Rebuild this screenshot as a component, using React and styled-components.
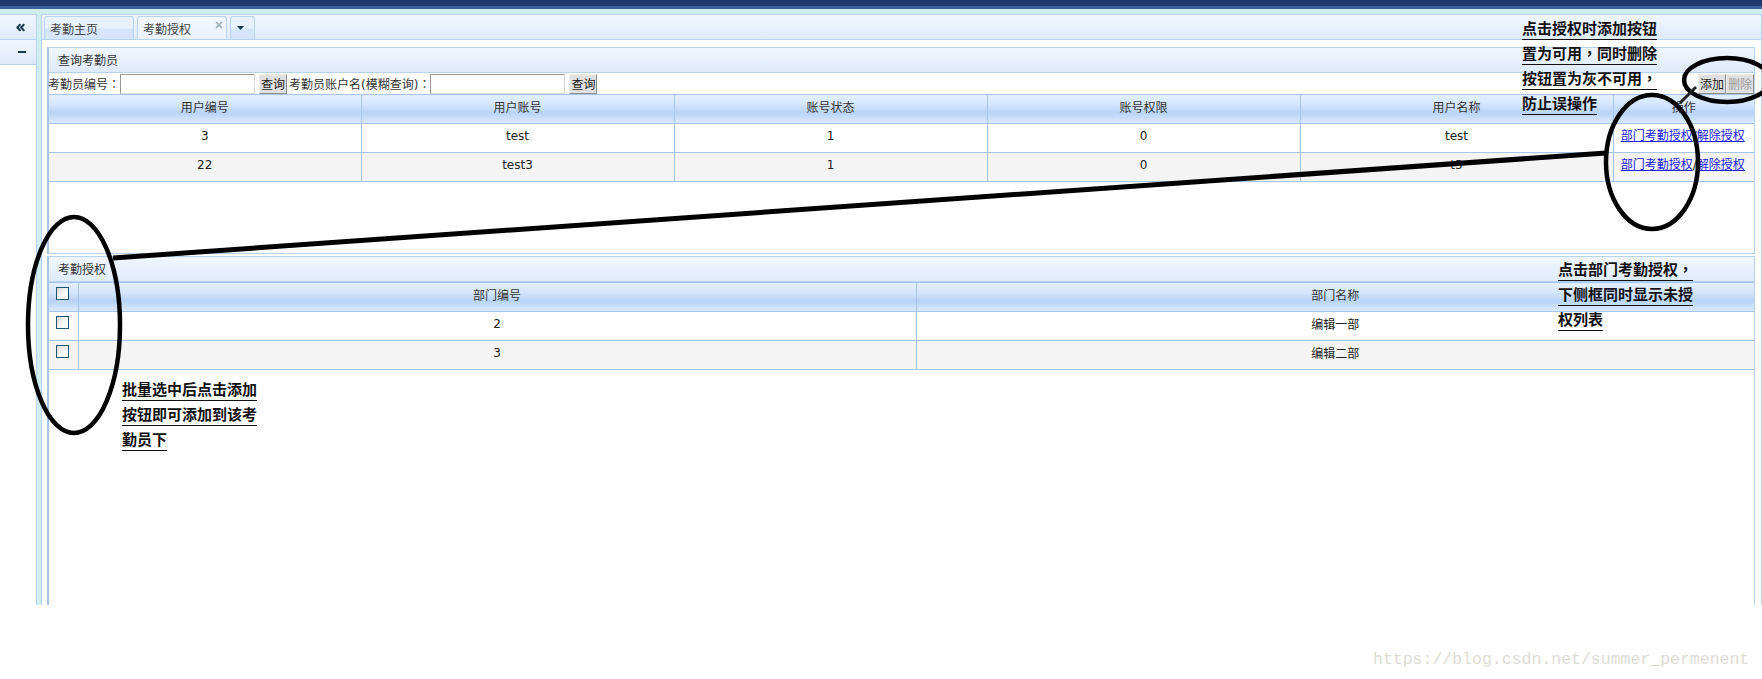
import React from 'react';
import styled, { createGlobalStyle } from 'styled-components';
import { ChevronsLeft, X } from 'lucide-react';

const GlobalStyle = createGlobalStyle`
  html, body {
    margin: 0;
    padding: 0;
    background: #fff;
  }
  body {
    font-family: 'DejaVu Sans', 'Noto Sans CJK SC', sans-serif;
    font-size: 12px;
    color: #222;
  }
  * {
    box-sizing: border-box;
  }
`;

const Page = styled.div`
  position: relative;
  width: 1762px;
  height: 679px;
  overflow: hidden;
`;

const Frame = styled.div`
  display: flex;
  flex-direction: column;
  height: 605px;
  background: #cfeeee;
`;

const TopBar = styled.div`
  height: 9px;
  flex: none;
  margin-bottom: 5px;
  background: #1f3a70;
  border-bottom: 3px solid #3d619b;
`;

const Body = styled.div`
  flex: 1;
  display: flex;
  gap: 4px;
  min-height: 0;
`;

const Side = styled.aside`
  width: 37px;
  flex: none;
  background: #fff;
  border-top: 1px solid #b8d2f2;
  border-right: 1px solid #b8d2f2;
`;

const SideRow = styled.div`
  height: 25px;
  display: flex;
  align-items: center;
  justify-content: flex-end;
  padding-right: 9px;
  background: linear-gradient(#f0f6ff, #dfeafb);
  border-bottom: 1px solid #b8d2f2;
  color: #15384f;
`;

const SideDash = styled.span`
  display: block;
  width: 8px;
  height: 2px;
  margin-right: 1px;
  background: #15384f;
`;

const Main = styled.main`
  flex: 1;
  min-width: 0;
  display: flex;
  flex-direction: column;
  background: #fff;
  border-left: 1px solid #b8d2f2;
  border-right: 1px solid #b8d2f2;
  border-top: 1px solid #b8d2f2;
`;

const TabBar = styled.div`
  height: 25px;
  flex: none;
  display: flex;
  align-items: flex-end;
  gap: 3px;
  padding-left: 2px;
  background: linear-gradient(#f0f6ff, #dfeafb);
  border-bottom: 1px solid #b8d2f2;
`;

const Tab = styled.div`
  position: relative;
  height: 23px;
  width: ${(p) => p.$width}px;
  padding: 3px 0 0 5px;
  border: 1px solid #b8d2f2;
  border-bottom: none;
  border-radius: 3px 3px 0 0;
  background: ${(p) =>
    p.$active ? 'linear-gradient(#f2f7ff, #eaf2fe)' : 'linear-gradient(#e8f1fe 50%, #d5e5fb 55%)'};
  color: #444;
`;

const TabClose = styled.span`
  position: absolute;
  top: 3px;
  right: 2px;
  display: flex;
  color: #9ab0b8;
`;

const Content = styled.div`
  flex: 1;
  min-height: 0;
  display: flex;
  flex-direction: column;
  gap: 2px;
  padding: 7px 6px 0 5px;
`;

const Panel = styled.section`
  display: flex;
  flex-direction: column;
  flex: ${(p) => (p.$grow ? 1 : 'none')};
  height: ${(p) => (p.$grow ? 'auto' : `${p.$height}px`)};
  border: 1px solid #b8d2f2;
  border-bottom: ${(p) => (p.$grow ? 'none' : '1px solid #b8d2f2')};
  border-left: 2px solid #a6c5ea;
`;

const PanelTitle = styled.div`
  height: 25px;
  flex: none;
  display: flex;
  align-items: center;
  padding: 0 0 2px 9px;
  background: linear-gradient(#f0f6ff, #dfeafb);
  border-bottom: 1px solid #b8d2f2;
  color: #333;
`;

const Toolbar = styled.div`
  height: 21px;
  flex: none;
  display: flex;
  align-items: center;
  margin-left: -1px;
  white-space: nowrap;
`;

const Label = styled.span`
  margin-left: ${(p) => p.$before || 0}px;
  color: #333;
`;

const TextInput = styled.input`
  width: 135px;
  height: 20px;
  padding: 0;
  margin: 0;
  background: #fff;
  border: 1px solid;
  border-color: #9a9a9a #d8d8d8 #d8d8d8 #9a9a9a;
`;

const PlainButton = styled.button`
  width: 28px;
  height: 20px;
  padding: 0;
  margin: 0 0 0 ${(p) => p.$before || 0}px;
  font: inherit;
  color: ${(p) => (p.disabled ? '#9c9c9c' : '#222')};
  background: #e0e0e0;
  border: 1px solid;
  border-color: #eee #8e8e8e #8e8e8e #eee;
`;

const Spacer = styled.div`
  flex: 1;
`;

const Table = styled.table`
  width: 100%;
  table-layout: fixed;
  border-collapse: collapse;
  border-top: 1px solid #a6c5ea;
`;

const HeadCell = styled.th`
  height: 29px;
  padding: 0 0 5px;
  font-weight: normal;
  color: #333;
  text-align: center;
  background: linear-gradient(#e3effe, #d2e4fb 35%, #b8d3f6 62%, #dcebfd);
  border-right: 1px solid #a6c5ea;
  border-bottom: 1px solid #a6c5ea;
  &:last-child {
    border-right: none;
  }
`;

const Row = styled.tr`
  background: ${(p) => (p.$alt ? '#f4f4f4' : '#fff')};
`;

const Cell = styled.td`
  height: 29px;
  padding: 0 0 4px;
  text-align: center;
  color: #222;
  border-right: 1px solid #a6c5ea;
  border-bottom: 1px solid #a6c5ea;
  &:last-child {
    border-right: none;
  }
`;

// chinese text sits a little lower in its line box than the latin cells
const TextCell = styled(Cell)`
  padding: 0 0 6px;
`;

const LinkCell = styled(Cell)`
  padding: 0 2px 7px 0;
`;

const CheckCell = styled(Cell)`
  vertical-align: top;
  padding: 4px 0 0 7px;
  text-align: left;
`;

const CheckHead = styled(HeadCell)`
  vertical-align: top;
  padding: 4px 0 0 7px;
  text-align: left;
`;

const Check = styled.span`
  display: block;
  width: 13px;
  height: 13px;
  border: 1px solid #1d5673;
  background: linear-gradient(135deg, #d8d8d4, #fff 70%);
`;

const OpLink = styled.a`
  color: #2020e0;
  text-decoration: underline;
`;

const Note = styled.div`
  position: absolute;
  left: ${(p) => p.$x}px;
  top: ${(p) => p.$y}px;
  width: 136px;
  display: flex;
  flex-direction: column;
  gap: 2px;
  font-family: 'Noto Sans CJK SC', sans-serif;
  font-size: 15px;
  font-weight: 700;
  line-height: 22px;
  color: #111;
  z-index: 3;
`;

const NoteLine = styled.span`
  align-self: flex-start;
  border-bottom: 1px solid #111;
`;

// full-width punctuation sits in the middle of its cell in the reference
const Punct = styled.span`
  font-family: 'Noto Sans CJK TC', sans-serif;
`;

const Marks = styled.svg`
  position: absolute;
  left: 0;
  top: 0;
  z-index: 2;
  pointer-events: none;
`;

const Watermark = styled.div`
  position: absolute;
  left: 1373px;
  top: 650px;
  font-family: 'Liberation Mono', monospace;
  font-size: 16.5px;
  color: #dedcd4;
  white-space: nowrap;
`;

const userCols = [312, 313, 313, 313, 313, 141];
const users = [
  { id: '3', account: 'test', status: '1', power: '0', name: 'test' },
  { id: '22', account: 'test3', status: '1', power: '0', name: 't3' },
];
const depts = [
  { id: '2', name: '编辑一部' },
  { id: '3', name: '编辑二部' },
];

const withPunct = (text) =>
  text.split(/(，|：)/).map((part, i) => (i % 2 === 1 ? <Punct key={i}>{part}</Punct> : part));

const NoteBlock = ({ x, y, lines }) => (
  <Note $x={x} $y={y}>
    {lines.map((line) => (
      <NoteLine key={line}>{withPunct(line)}</NoteLine>
    ))}
  </Note>
);

const App = () => {
  return (
    <Page>
      <GlobalStyle />
      <Frame>
        <TopBar />
        <Body>
          <Side>
            <SideRow>
              <ChevronsLeft size={13} strokeWidth={3.5} />
            </SideRow>
            <SideRow>
              <SideDash />
            </SideRow>
          </Side>
          <Main>
            <TabBar>
              <Tab $width={90}>考勤主页</Tab>
              <Tab $width={90} $active>
                考勤授权
                <TabClose>
                  <X size={10} strokeWidth={4} />
                </TabClose>
              </Tab>
              <Tab $width={25}>
                <svg width="10" height="14" viewBox="0 0 10 14">
                  <path d="M1 6h7L4.5 10z" fill="#15384f" />
                </svg>
              </Tab>
            </TabBar>
            <Content>
              <Panel $height={207}>
                <PanelTitle>查询考勤员</PanelTitle>
                <Toolbar>
                  <Label>考勤员编号{withPunct('：')}</Label>
                  <TextInput />
                  <PlainButton $before={4}>查询</PlainButton>
                  <Label $before={2}>考勤员账户名(模糊查询){withPunct('：')}</Label>
                  <TextInput />
                  <PlainButton $before={4}>查询</PlainButton>
                  <Spacer />
                  <PlainButton>添加</PlainButton>
                  <PlainButton disabled>删除</PlainButton>
                </Toolbar>
                <Table>
                  <colgroup>
                    {userCols.map((w, i) => (
                      <col key={i} width={w} />
                    ))}
                  </colgroup>
                  <thead>
                    <tr>
                      {['用户编号', '用户账号', '账号状态', '账号权限', '用户名称', '操作'].map((h) => (
                        <HeadCell key={h}>{h}</HeadCell>
                      ))}
                    </tr>
                  </thead>
                  <tbody>
                    {users.map((u, i) => (
                      <Row key={u.id} $alt={i % 2 === 1}>
                        <Cell>{u.id}</Cell>
                        <Cell>{u.account}</Cell>
                        <Cell>{u.status}</Cell>
                        <Cell>{u.power}</Cell>
                        <Cell>{u.name}</Cell>
                        <LinkCell>
                          <OpLink>部门考勤授权</OpLink>/<OpLink>解除授权</OpLink>
                        </LinkCell>
                      </Row>
                    ))}
                  </tbody>
                </Table>
              </Panel>
              <Panel $grow>
                <PanelTitle>考勤授权</PanelTitle>
                <Table>
                  <colgroup>
                    <col width={29} />
                    <col width={838} />
                    <col />
                  </colgroup>
                  <thead>
                    <tr>
                      <CheckHead>
                        <Check />
                      </CheckHead>
                      <HeadCell>部门编号</HeadCell>
                      <HeadCell>部门名称</HeadCell>
                    </tr>
                  </thead>
                  <tbody>
                    {depts.map((d, i) => (
                      <Row key={d.id} $alt={i % 2 === 1}>
                        <CheckCell>
                          <Check />
                        </CheckCell>
                        <Cell>{d.id}</Cell>
                        <TextCell>{d.name}</TextCell>
                      </Row>
                    ))}
                  </tbody>
                </Table>
              </Panel>
            </Content>
          </Main>
        </Body>
      </Frame>

      <NoteBlock x={1522} y={17} lines={['点击授权时添加按钮', '置为可用，同时删除', '按钮置为灰不可用，', '防止误操作']} />
      <NoteBlock x={1558} y={258} lines={['点击部门考勤授权，', '下侧框同时显示未授', '权列表']} />
      <NoteBlock x={122} y={378} lines={['批量选中后点击添加', '按钮即可添加到该考', '勤员下']} />

      <Marks width="1762" height="679" viewBox="0 0 1762 679">
        <g fill="none" stroke="#000">
          <ellipse cx="1727" cy="80" rx="43" ry="22" strokeWidth="4.5" />
          <ellipse cx="1652" cy="162" rx="46" ry="67" strokeWidth="4.5" />
          <ellipse cx="74" cy="325" rx="46" ry="108" strokeWidth="4.5" />
          <path d="M113 258L1606 153" strokeWidth="5" />
          <path d="M1680 103L1696 87" strokeWidth="3" stroke="#222" />
        </g>
      </Marks>
      <Watermark>https://blog.csdn.net/summer_permenent</Watermark>
    </Page>
  );
};

export default App;
